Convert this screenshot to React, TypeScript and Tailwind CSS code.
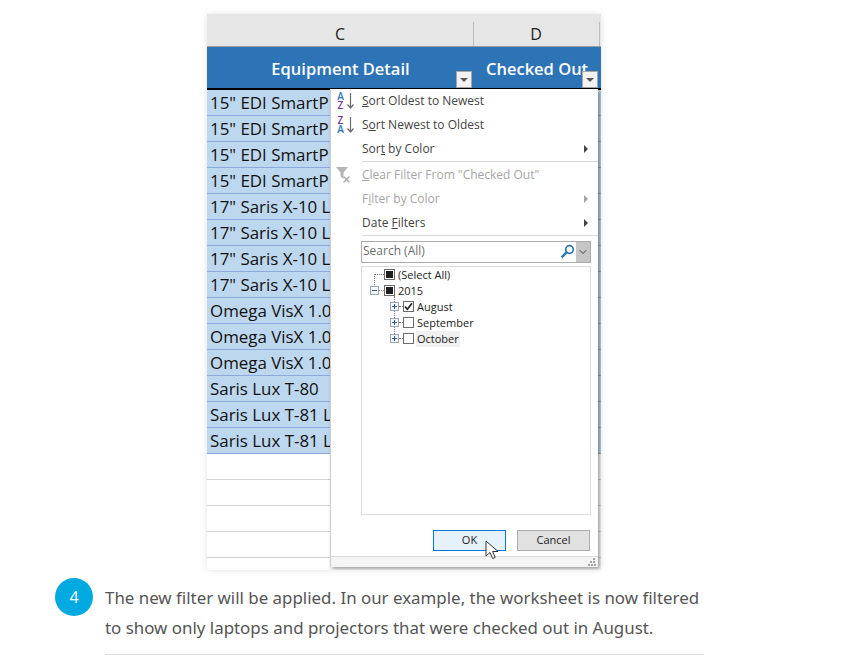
import { ReactNode } from "react";
import { ChevronDown } from "lucide-react";

const sheetRows = [
  '15" EDI SmartP',
  '15" EDI SmartP',
  '15" EDI SmartP',
  '15" EDI SmartP',
  '17" Saris X-10 L',
  '17" Saris X-10 L',
  '17" Saris X-10 L',
  '17" Saris X-10 L',
  "Omega VisX 1.0",
  "Omega VisX 1.0",
  "Omega VisX 1.0",
  "Saris Lux T-80",
  "Saris Lux T-81 Li",
  "Saris Lux T-81 Li",
];

function FilterButton() {
  return (
    <div className="w-[16px] h-[17px] bg-[#f2f2f2] border border-[#a6a6a6] flex items-center justify-center">
      <div className="w-0 h-0 border-l-[4px] border-r-[4px] border-t-[4px] border-l-transparent border-r-transparent border-t-[#595959]" />
    </div>
  );
}

function SortIcon({ top, bottom, topClass, bottomClass }: { top: string; bottom: string; topClass: string; bottomClass: string }) {
  return (
    <div className="w-[20px] h-[20px] flex items-center ml-[5px]">
      <div className="flex flex-col items-center w-[9px] text-[10px] leading-[9px] font-semibold">
        <span className={topClass}>{top}</span>
        <span className={bottomClass}>{bottom}</span>
      </div>
      <svg width="9" height="18" viewBox="0 0 9 18" className="ml-[1px]">
        <path d="M4.5 1v15M1.5 12.5l3 3.5 3-3.5" fill="none" stroke="#6b6b6b" strokeWidth="1.2" />
      </svg>
    </div>
  );
}

function MenuItem({ icon, children, disabled, arrow }: { icon?: ReactNode; children: ReactNode; disabled?: boolean; arrow?: boolean }) {
  return (
    <div className={`h-[24px] flex items-center text-[12px] ${disabled ? "text-[#a6a6a6]" : "text-[#444444]"}`}>
      <div className="w-[31px] shrink-0">{icon}</div>
      <span className="flex-1">{children}</span>
      {arrow && (
        <div className={`mr-[10px] w-0 h-0 border-t-[4px] border-b-[4px] border-l-[4px] border-t-transparent border-b-transparent ${disabled ? "border-l-[#a6a6a6]" : "border-l-[#444444]"}`} />
      )}
    </div>
  );
}

type TreeRowProps = {
  indent: string;
  gap: string;
  box: "mixed" | "checked" | "empty";
  label: string;
  expander?: "+" | "-";
  highlight?: boolean;
};

function TreeRow({ indent, gap, box, label, expander, highlight }: TreeRowProps) {
  return (
    <div className={`relative h-[16px] flex items-center ${indent}`}>
      {expander && (
        <div className="w-[9px] h-[9px] border border-[#9aa5b5] bg-[#f3f5f8] flex items-center justify-center">
          <div className="relative w-[5px] h-[1px] bg-[#34548c]">
            {expander === "+" && <div className="absolute left-[2px] top-[-2px] w-[1px] h-[5px] bg-[#34548c]" />}
          </div>
        </div>
      )}
      <div className={`${gap} border-t border-dotted border-[#777777]`} />
      <div className="w-[11px] h-[11px] border border-[#6b6b6b] bg-white flex items-center justify-center">
        {box === "mixed" && <div className="w-[7px] h-[7px] bg-[#1f1f1f]" />}
        {box === "checked" && (
          <svg width="9" height="9" viewBox="0 0 9 9">
            <path d="M1 4.5 3.4 7.2 8 1.2" fill="none" stroke="#1f1f1f" strokeWidth="1.7" />
          </svg>
        )}
      </div>
      <span className={`ml-[2px] px-[1px] text-[11px] text-[#222222] leading-[16px] ${highlight ? "bg-[#f0f0f0]" : ""}`}>{label}</span>
    </div>
  );
}

function FilterMenu() {
  return (
    <div className="absolute left-[123px] top-[75px] w-[268px] h-[478px] bg-white border-l border-[#d0d0d0] shadow-[2px_2px_4px_rgba(0,0,0,0.4)] flex flex-col">
      <div>
        <MenuItem icon={<SortIcon top="A" bottom="Z" topClass="text-[#2f75b5]" bottomClass="text-[#7030a0]" />}>
          <u>S</u>ort Oldest to Newest
        </MenuItem>
        <MenuItem icon={<SortIcon top="Z" bottom="A" topClass="text-[#7030a0]" bottomClass="text-[#2f75b5]" />}>
          S<u>o</u>rt Newest to Oldest
        </MenuItem>
        <MenuItem arrow>
          Sor<u>t</u> by Color
        </MenuItem>
        <div className="ml-[31px] mb-[1px] h-[1px] bg-[#d9d9d9]" />
        <MenuItem
          disabled
          icon={
            <svg width="18" height="18" viewBox="0 0 18 18" className="ml-[4px]">
              <path d="M1 1h12L8.5 6.5V13L5.5 10.5V6.5z" fill="#b5b5b5" />
              <path d="M8.5 10.5l6 6M14.5 10.5l-6 6" stroke="#a6a6a6" strokeWidth="1.3" />
            </svg>
          }
        >
          <u>C</u>lear Filter From "Checked Out"
        </MenuItem>
        <MenuItem disabled arrow>
          F<u>i</u>lter by Color
        </MenuItem>
        <MenuItem arrow>
          Date <u>F</u>ilters
        </MenuItem>
        <div className="ml-[31px] h-[1px] bg-[#d9d9d9]" />
      </div>

      <div className="ml-[30px] mr-[7px] mt-[5px] h-[22px] border border-[#ababab] flex items-center">
        <span className="flex-1 pl-[1px] -mt-[1px] text-[12px] text-[#6d6d6d]">Search (All)</span>
        <svg width="15" height="15" viewBox="0 0 15 15" className="mr-[1px]">
          <circle cx="9.5" cy="5.5" r="3.8" fill="none" stroke="#2f75b5" strokeWidth="1.7" />
          <path d="M6.6 8.4 1.6 13.4" stroke="#2f75b5" strokeWidth="2.4" />
        </svg>
        <div className="w-[14px] h-full bg-[#c6c6c6] flex items-center justify-center">
          <ChevronDown size={12} className="text-[#444444]" />
        </div>
      </div>

      <div className="relative ml-[30px] mr-[7px] mt-[3px] h-[250px] border border-[#dcdcdc]">
        <div className="absolute left-[12px] top-[7px] h-[13px] border-l border-dotted border-[#777777]" />
        <div className="absolute left-[32px] top-[29px] h-[38px] border-l border-dotted border-[#777777]" />
        <TreeRow indent="pl-[12px]" gap="w-[10px]" box="mixed" label="(Select All)" />
        <TreeRow indent="pl-[8px]" gap="w-[5px]" box="mixed" label="2015" expander="-" />
        <TreeRow indent="pl-[28px]" gap="w-[4px]" box="checked" label="August" expander="+" />
        <TreeRow indent="pl-[28px]" gap="w-[4px]" box="empty" label="September" expander="+" />
        <TreeRow indent="pl-[28px]" gap="w-[4px]" box="empty" label="October" expander="+" highlight />
      </div>

      <div className="flex justify-end gap-[11px] mr-[8px] mt-[15px]">
        <div className="w-[73px] h-[21px] bg-[#e5f1fb] border border-[#0078d7] flex items-center justify-center text-[11px] text-[#222222]">OK</div>
        <div className="w-[73px] h-[21px] bg-[#e1e1e1] border border-[#adadad] flex items-center justify-center text-[11px] text-[#222222]">Cancel</div>
      </div>

      <div className="mt-[5px] h-[11px] border-t border-[#dcdcdc] bg-[#f4f4f4] flex justify-end items-end pr-[2px] pb-[1px]">
        <svg width="8" height="8" viewBox="0 0 8 8">
          <path d="M5 0h2v2H5zM2 3h2v2H2zM5 3h2v2H5zM0 6h2v2H0zM3 6h2v2H3zM6 6h2v2H6z" fill="#a0a0a0" />
        </svg>
      </div>

      {/* mouse pointer */}
      <svg width="16" height="22" viewBox="0 0 16 22" className="absolute left-[154px] top-[451px]">
        <path d="M1 1v15l4-3.5 2.6 6 2.6-1.1-2.6-5.9H13z" fill="white" stroke="#333333" strokeWidth="1" />
      </svg>
    </div>
  );
}

function Worksheet() {
  return (
    <div className="relative ml-[207px] mt-[14px] w-[394px] h-[556px] bg-white shadow-[0_0_6px_rgba(0,0,0,0.12)] overflow-hidden font-['Open_Sans',sans-serif]">
      <div className="h-[33px] bg-[#e6e6e6] flex items-end text-[16px] text-[#222222] border-b border-[#9d9d9d]">
        <div className="w-[267px] h-[24px] flex items-center justify-center border-r border-[#bdbdbd]">C</div>
        <div className="w-[126px] h-[24px] flex items-center justify-center border-r border-[#bdbdbd] pr-[1px]">D</div>
      </div>
      <div className="h-[43px] bg-[#2c74b6] flex border-b-2 border-black text-[16.5px] font-semibold text-white">
        <div className="w-[267px] relative flex items-center justify-center pt-[3px]">
          Equipment Detail
          <div className="absolute right-[2px] bottom-0">
            <FilterButton />
          </div>
        </div>
        <div className="w-[127px] relative flex items-center pt-[3px]">
          <span className="ml-[12px]">Checked Out</span>
          <div className="absolute left-[108px] bottom-0">
            <FilterButton />
          </div>
        </div>
      </div>
      {sheetRows.map((name, i) => (
        <div key={i} className="h-[26px] bg-[#bdd7ee] border-b border-[#8ea9db] pl-[3px] flex items-center text-[16.9px] text-[#111111]">
          <span className="w-[120px] overflow-hidden whitespace-nowrap">{name}</span>
        </div>
      ))}
      {[0, 1, 2, 3].map((i) => (
        <div key={i} className="h-[26px] border-b border-[#d4d4d4]" />
      ))}
      <FilterMenu />
    </div>
  );
}

export default function App() {
  return (
    <div className="w-[847px] h-[655px] overflow-hidden bg-white">
      <Worksheet />
      <div className="flex ml-[55px] mt-[8px]">
        <div className="w-[38px] h-[38px] rounded-full bg-[#00a9e0] text-white text-[16px] font-medium flex items-center justify-center shrink-0 font-['Open_Sans',sans-serif]">
          4
        </div>
        <div className="ml-[12px] w-[599px] pt-[5px]">
          <p className="text-[16.9px] leading-[30px] text-[#555555] font-['Noto_Sans',sans-serif] whitespace-nowrap">
            The new filter will be applied. In our example, the worksheet is now filtered
            <br />
            to show only laptops and projectors that were checked out in August.
          </p>
          <div className="mt-[11px] h-[1px] bg-[#dddddd]" />
        </div>
      </div>
    </div>
  );
}
